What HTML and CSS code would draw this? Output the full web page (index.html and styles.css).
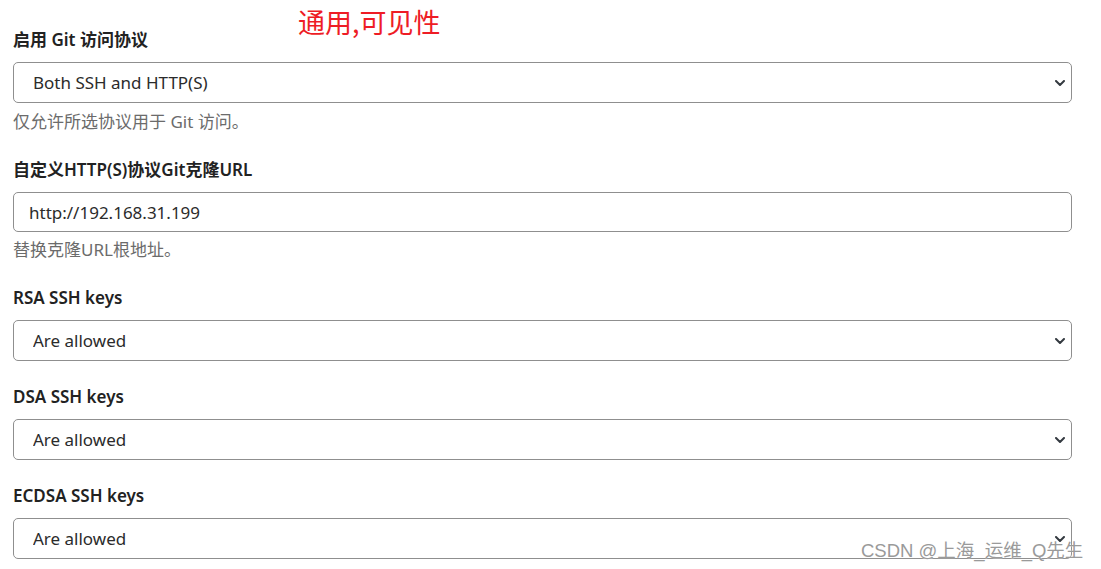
FILE: index.html
```html
<!DOCTYPE html>
<html lang="zh-CN">
  <head>
    <meta charset="UTF-8" />
    <meta name="viewport" content="width=device-width, initial-scale=1.0" />
    <title>Git 设置</title>
    <link rel="stylesheet" href="styles.css">
  </head>

  <body>
    <div class="note">通用,可见性</div>

    <form class="settings">
      <div class="field">
        <label class="label" for="protocol">启用 Git 访问协议</label>
        <div class="select-wrap">
          <select id="protocol" class="control">
            <option>Both SSH and HTTP(S)</option>
            <option>Only SSH</option>
            <option>Only HTTP(S)</option>
          </select>
          <svg class="chevron" viewBox="0 0 10 6" width="10" height="6"><path d="M1 1l4 4 4-4" fill="none" stroke="#343a40" stroke-width="2" stroke-linecap="round" stroke-linejoin="round"/></svg>
        </div>
        <div class="help help-first">仅允许所选协议用于 Git 访问。</div>
      </div>

      <div class="field">
        <label class="label" for="cloneUrl">自定义HTTP(S)协议Git克隆URL</label>
        <input id="cloneUrl" class="control input" type="text" value="http://192.168.31.199">
        <div class="help">替换克隆URL根地址。</div>
      </div>

      <div class="field">
        <label class="label" for="rsa">RSA SSH keys</label>
        <div class="select-wrap">
          <select id="rsa" class="control">
            <option>Are allowed</option>
            <option>Are forbidden</option>
          </select>
          <svg class="chevron" viewBox="0 0 10 6" width="10" height="6"><path d="M1 1l4 4 4-4" fill="none" stroke="#343a40" stroke-width="2" stroke-linecap="round" stroke-linejoin="round"/></svg>
        </div>
      </div>

      <div class="field">
        <label class="label" for="dsa">DSA SSH keys</label>
        <div class="select-wrap">
          <select id="dsa" class="control">
            <option>Are allowed</option>
            <option>Are forbidden</option>
          </select>
          <svg class="chevron" viewBox="0 0 10 6" width="10" height="6"><path d="M1 1l4 4 4-4" fill="none" stroke="#343a40" stroke-width="2" stroke-linecap="round" stroke-linejoin="round"/></svg>
        </div>
      </div>

      <div class="field">
        <label class="label" for="ecdsa">ECDSA SSH keys</label>
        <div class="select-wrap">
          <select id="ecdsa" class="control">
            <option>Are allowed</option>
            <option>Are forbidden</option>
          </select>
          <svg class="chevron" viewBox="0 0 10 6" width="10" height="6"><path d="M1 1l4 4 4-4" fill="none" stroke="#343a40" stroke-width="2" stroke-linecap="round" stroke-linejoin="round"/></svg>
        </div>
      </div>
    </form>

    <div class="watermark">CSDN @上海_运维_Q先生</div>
  </body>
</html>
```

FILE: styles.css
```css
html, body {
  height: 100%;
  overflow: hidden;
}
body {
  margin: 0;
  background: #fff;
  color: #212529;
  font-family: 'Noto Sans', 'Noto Sans CJK SC', sans-serif;
  font-size: 17px;
  position: relative;
}
.settings {
  padding: 27px 29px 0 13px;
  width: 1059px;
}
.field {
  display: flex;
  flex-direction: column;
  margin-bottom: 23px;
}
.label {
  font-weight: 600;
  line-height: 25px;
  margin-bottom: 10px;
  color: #222;
}
.select-wrap {
  position: relative;
}
.control {
  display: block;
  width: 100%;
  box-sizing: border-box;
  height: 41px;
  padding: 0 40px 0 19px;
  font-family: inherit;
  font-size: 17px;
  color: #2b2b2b;
  background: #fff;
  border: 1px solid #8f8f8f;
  border-radius: 5px;
  appearance: none;
  -webkit-appearance: none;
  outline: none;
}
.input {
  height: 40px;
  padding-left: 15px;
}
.chevron {
  position: absolute;
  right: 7px;
  top: 18px;
}
.help {
  margin-top: 6px;
  line-height: 24px;
  color: #6b6b6b;
}
.help-first {
  margin-top: 7px;
}
.note {
  position: absolute;
  left: 298px;
  top: 2px;
  font-size: 27px;
  color: #ee1c25;
  font-family: 'Noto Sans CJK SC', sans-serif;
}
.watermark {
  position: absolute;
  left: 861px;
  top: 536px;
  font-size: 18.5px;
  color: #9a9a9a;
  font-family: 'Liberation Sans', 'Noto Sans CJK SC', sans-serif;
  text-shadow: 0 0 1px #fff;
}
```
